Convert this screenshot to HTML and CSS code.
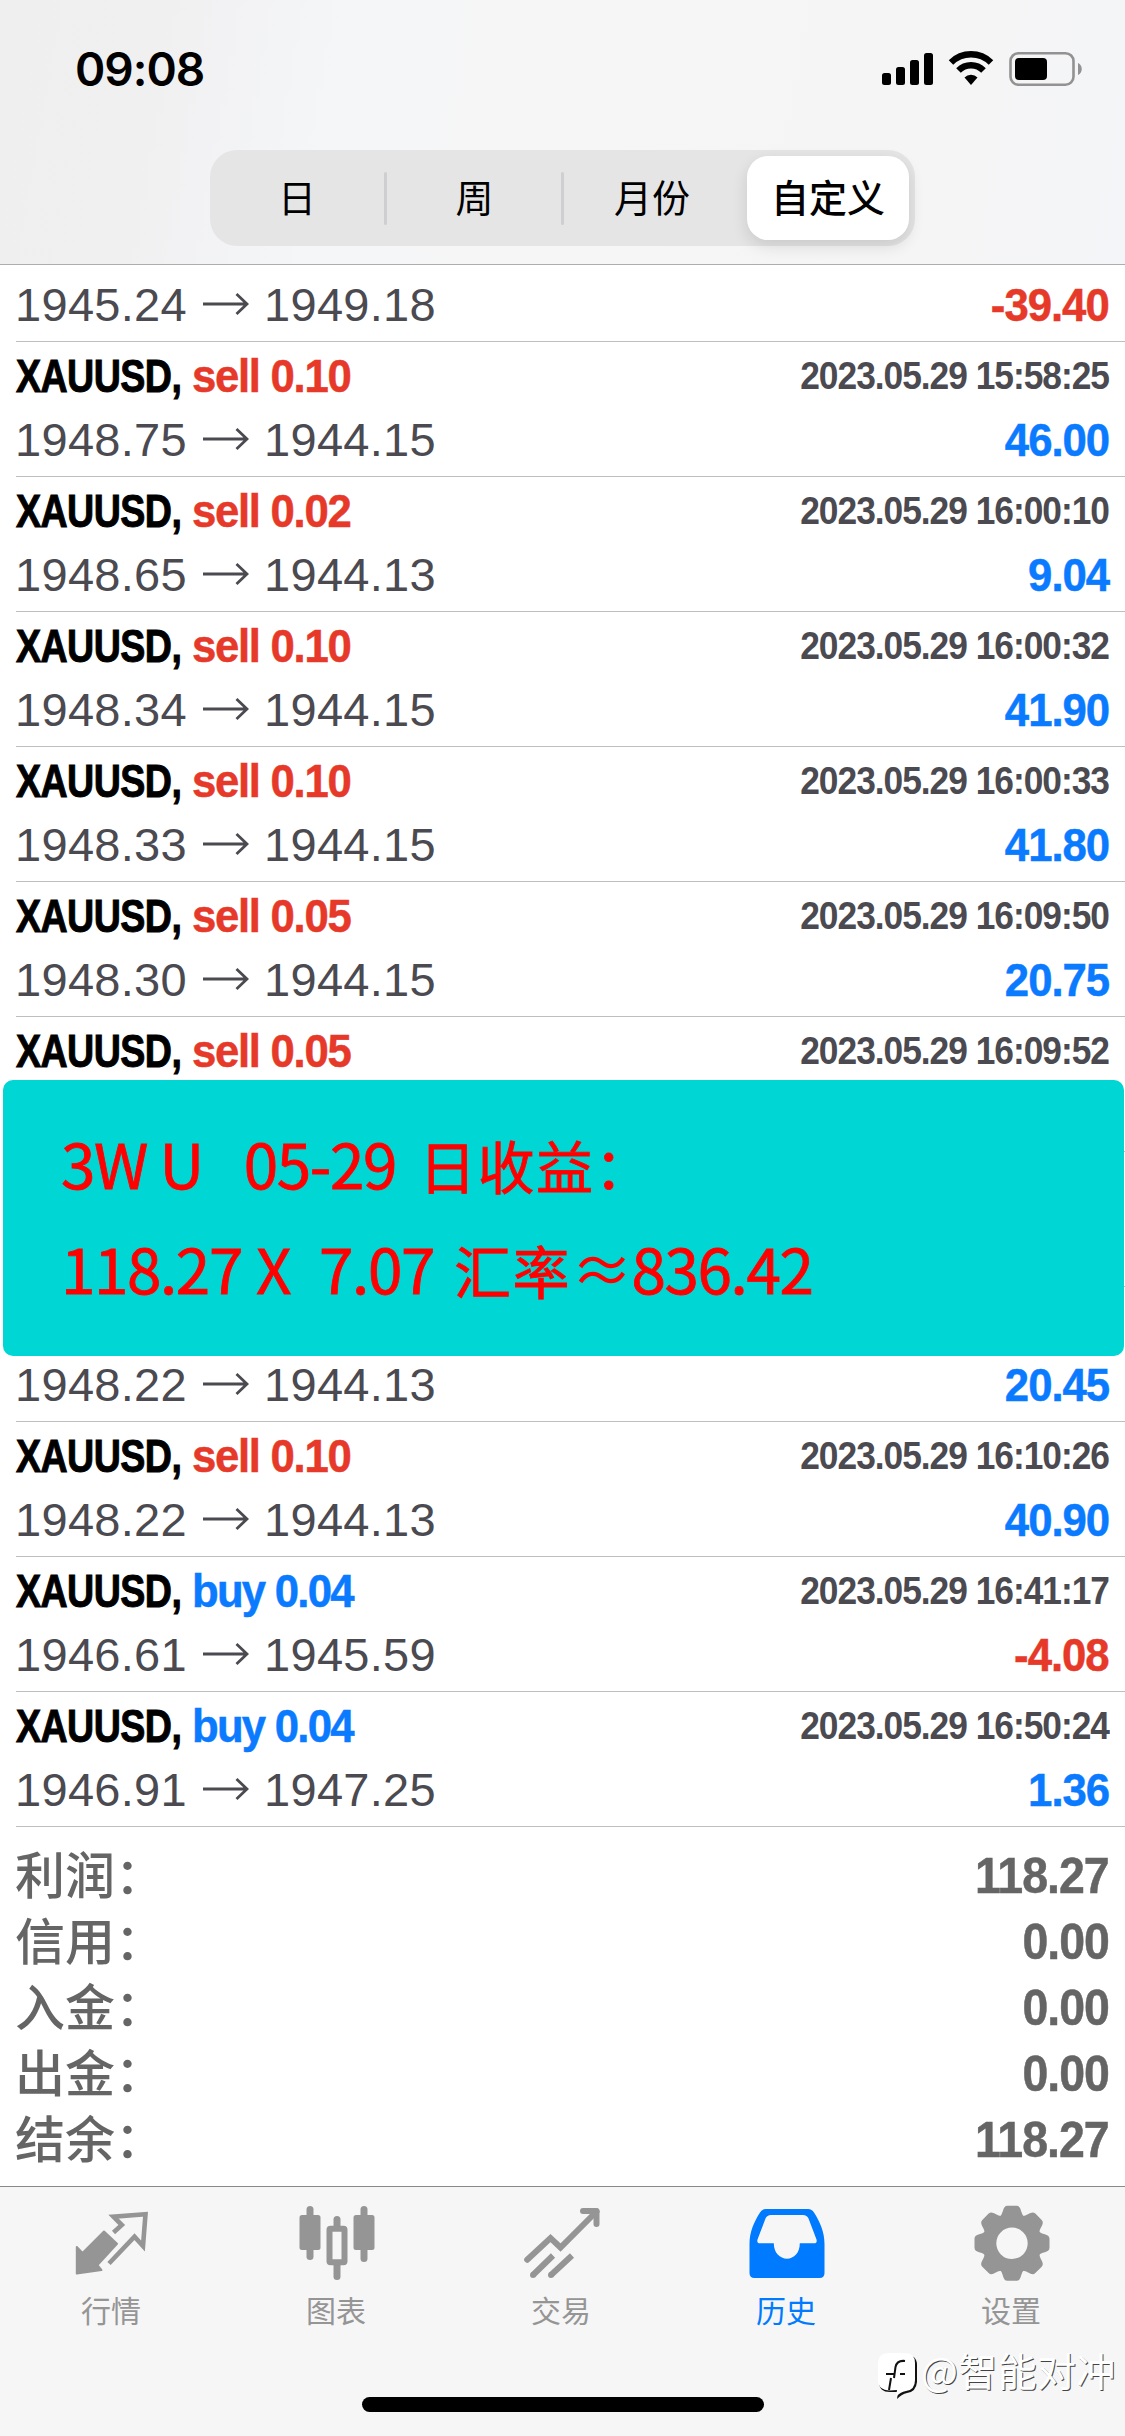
FILE: index.html
```html
<!DOCTYPE html>
<html lang="zh-CN">
<head>
  <meta charset="utf-8">
  <title>历史</title>
  <link rel="stylesheet" href="styles.css">
</head>
<body>
  <svg class="defs" width="0" height="0">
    <symbol id="arrow" viewBox="0 0 46 24">
      <path d="M0 12H44M33.5 2L44 12L33.5 22" fill="none" stroke="currentColor" stroke-width="2.8"/>
    </symbol>
    <symbol id="tooth" viewBox="-40 -40 80 80">
      <path d="M-13 -26C-8 -29 -10 -37.5 -4.5 -37.5H4.5C10 -37.5 8 -29 13 -26Z"/>
    </symbol>
  </svg>

  <header class="header">
    <div class="status-bar">
      <span class="time">09:08</span>
      <svg class="status-icons" width="202" height="36" viewBox="0 0 202 36">
        <rect x="1" y="22" width="9" height="12" rx="2.5"/>
        <rect x="15" y="16" width="9" height="18" rx="2.5"/>
        <rect x="29" y="9" width="9" height="25" rx="2.5"/>
        <rect x="43" y="2" width="9" height="32" rx="2.5"/>
        <g fill="none" stroke="#000" stroke-width="6.4">
          <path d="M70 11.5A28.5 28.5 0 0 1 110 11.5"/>
          <path d="M77.5 19.5A17.5 17.5 0 0 1 102.5 19.5"/>
        </g>
        <path d="M83.5 26.5A9 9 0 0 1 96.5 26.5L90 34Z"/>
        <rect x="129.5" y="2.2" width="63" height="31.5" rx="8" fill="none" stroke="#929292" stroke-width="2.6"/>
        <rect x="134" y="7" width="32" height="22" rx="4"/>
        <path d="M197 12C202 14 202 22 197 24Z" fill="#929292"/>
      </svg>
    </div>
    <div class="segmented">
      <button class="segment">日</button>
      <button class="segment">周</button>
      <button class="segment">月份</button>
      <button class="segment active">自定义</button>
    </div>
  </header>

  <main class="history">
    <div id="deals"></div>

    <div class="note">
      <p><span class="n1">3W U</span><span class="n2">05-29</span><b>日收益：</b></p>
      <p><span class="n3">118.27</span><span class="n4">X</span><span class="n5">7.07</span><b>汇率</b><span class="n6">≈</span><span>836.42</span></p>
    </div>

    <div class="summary">
      <div class="sum-row"><span>利润：</span><span class="sum-value">118.27</span></div>
      <div class="sum-row"><span>信用：</span><span class="sum-value">0.00</span></div>
      <div class="sum-row"><span>入金：</span><span class="sum-value">0.00</span></div>
      <div class="sum-row"><span>出金：</span><span class="sum-value">0.00</span></div>
      <div class="sum-row"><span>结余：</span><span class="sum-value">118.27</span></div>
    </div>
  </main>

  <nav class="tab-bar">
    <div class="tab">
      <svg width="84" height="84" viewBox="0 0 84 84">
        <path d="M42.5 32.5L50.8 25L42.5 16.7L74.5 14.2L72 46L63.5 36.7L38 63.5" fill="none" stroke="currentColor" stroke-width="4.6"/>
        <path d="M5.8 47L11.5 53L33 31.5L46 43.7L26.5 65L30.5 70L5.8 73.5Z" fill="currentColor" stroke="currentColor" stroke-width="2" stroke-linejoin="round"/>
      </svg>
      <span>行情</span>
    </div>
    <div class="tab">
      <svg width="84" height="84" viewBox="0 0 84 84" fill="currentColor">
        <rect x="10.5" y="6" width="7" height="54" rx="3.5"/>
        <rect x="3.5" y="15" width="21" height="35" rx="2.5"/>
        <rect x="64.5" y="6" width="7" height="56" rx="3.5"/>
        <rect x="57.5" y="15" width="21" height="35" rx="2.5"/>
        <rect x="37.5" y="16" width="7" height="14" rx="3.5"/>
        <rect x="37.5" y="62" width="7" height="18" rx="3.5"/>
        <rect x="33.5" y="28.7" width="15" height="33.5" rx="1" fill="none" stroke="currentColor" stroke-width="6"/>
      </svg>
      <span>图表</span>
    </div>
    <div class="tab">
      <svg width="84" height="84" viewBox="0 0 84 84" fill="none" stroke="currentColor" stroke-width="6">
        <path d="M6.2 59.7L29.5 38L39.5 47.5L75.5 11.5" stroke-linecap="round"/>
        <path d="M62 11H75.5V24" stroke-linecap="round" stroke-linejoin="round"/>
        <path d="M32 55.5L12 75M51 55.5L30 75"/>
        <path d="M12 75h0M30 75h0" stroke-linecap="round"/>
      </svg>
      <span>交易</span>
    </div>
    <div class="tab active">
      <svg width="84" height="84" viewBox="0 0 84 84" fill="currentColor">
        <path fill-rule="evenodd" d="M20 9H62Q66 9 68 12.5C74 22 78.5 32 78.5 44V73Q78.5 78 73.5 78H8.5Q3.5 78 3.5 73V44C3.5 32 8 22 14 12.5Q16 9 20 9ZM25 15Q21 15 19.5 18.5L11.5 39.5Q10.5 43.3 14 43.3H27.8C27.8 53 34 58.7 41 58.7S53.8 53 53.8 43.3H68Q71.5 43.3 70.5 39.5L62.5 18.5Q61 15 57 15Z"/>
      </svg>
      <span>历史</span>
    </div>
    <div class="tab">
      <svg width="84" height="84" viewBox="0 0 84 84">
        <g transform="translate(41 43.3)" fill="currentColor">
          <circle r="22.6" fill="none" stroke="currentColor" stroke-width="13.8"/>
          <g id="teeth">
            <use href="#tooth" x="-40" y="-40" width="80" height="80"/>
            <use href="#tooth" x="-40" y="-40" width="80" height="80" transform="rotate(45)"/>
            <use href="#tooth" x="-40" y="-40" width="80" height="80" transform="rotate(90)"/>
            <use href="#tooth" x="-40" y="-40" width="80" height="80" transform="rotate(135)"/>
          </g>
          <use href="#teeth" transform="rotate(180)"/>
        </g>
      </svg>
      <span>设置</span>
    </div>
    <div class="home-indicator"></div>
    <div class="watermark">
      <svg width="44" height="50" viewBox="0 0 44 50">
        <path d="M13 3H29Q40 3 40 13V30Q39 40 30 41Q25 42 20 47L21 40L13 40Q2 40 2 30V14Q2 3 13 3Z" fill="#111"/>
        <path d="M12 1H28Q38 1 38 11V28Q38 38 29 39Q23 40 19 45L20 38L13 38.5Q1 38 1 28V12Q1 1 12 1Z" fill="#fff"/>
        <path d="M28 9Q20 8 18.5 15L17 26M9 22H18M23 22H28M14 26L12 38" fill="none" stroke="#111" stroke-width="2"/>
      </svg>
      <span>@智能对冲</span>
    </div>
  </nav>

  <script>
    // rows under the header and the note keep their height but not all of their text
    const deals = [
      ['', '', '', '1945.24', '1949.18', '-39.40'],
      ['sell', '0.10', '2023.05.29 15:58:25', '1948.75', '1944.15', '46.00'],
      ['sell', '0.02', '2023.05.29 16:00:10', '1948.65', '1944.13', '9.04'],
      ['sell', '0.10', '2023.05.29 16:00:32', '1948.34', '1944.15', '41.90'],
      ['sell', '0.10', '2023.05.29 16:00:33', '1948.33', '1944.15', '41.80'],
      ['sell', '0.05', '2023.05.29 16:09:50', '1948.30', '1944.15', '20.75'],
      ['sell', '0.05', '2023.05.29 16:09:52'],
      [],
      [null, null, null, '1948.22', '1944.13', '20.45'],
      ['sell', '0.10', '2023.05.29 16:10:26', '1948.22', '1944.13', '40.90'],
      ['buy', '0.04', '2023.05.29 16:41:17', '1946.61', '1945.59', '-4.08'],
      ['buy', '0.04', '2023.05.29 16:50:24', '1946.91', '1947.25', '1.36']
    ];

    const dealTop = (side, lots, time) => `
      <span class="symbol">XAUUSD,</span>
      <span class="side ${side}">${side} ${lots}</span>
      <span class="deal-time">${time}</span>`;

    const dealBottom = (open, close, profit) => `
      <span class="price">${open}</span>
      <svg class="arrow" width="46" height="24"><use href="#arrow"/></svg>
      <span class="price">${close}</span>
      <span class="profit ${profit < 0 ? 'loss' : ''}">${profit}</span>`;

    document.getElementById('deals').innerHTML = deals.map(([side, lots, time, open, close, profit]) => `
      <div class="deal">
        <div class="deal-top">${side != null ? dealTop(side, lots, time) : ''}</div>
        <div class="deal-bottom">${open ? dealBottom(open, close, profit) : ''}</div>
      </div>`).join('');
  </script>
</body>
</html>
```
FILE: styles.css
```css
* {
  margin: 0;
  padding: 0;
  box-sizing: border-box;
}

body {
  width: 1125px;
  height: 2436px;
  overflow: hidden;
  background: #fff;
  color: #000;
  font-family: "Liberation Sans", "Noto Sans CJK SC", sans-serif;
  display: flex;
  flex-direction: column;
}

.defs {
  position: absolute;
}

/* Header */
.header {
  position: relative;
  z-index: 2;
  height: 265px;
  flex-shrink: 0;
  background: linear-gradient(100deg, #efeff0 0, #f0f0f1 14%, #f5f6f8 30%, #f6f6f6 50%, #f5f5f5 80%, #f4f5f8 100%);
  border-bottom: 1px solid #adadad;
}

.status-bar {
  height: 138px;
  padding: 0 42px 0 75px;
  display: flex;
  align-items: center;
  justify-content: space-between;
}

.time {
  font-family: Inter, sans-serif;
  font-size: 46px;
  font-weight: 600;
  letter-spacing: -1px;
}

.segmented {
  width: 705px;
  height: 96px;
  margin: 12px 0 0 210px;
  padding: 6px;
  border-radius: 27px;
  background: #e5e5e6;
  display: flex;
}

.segment {
  position: relative;
  width: 177px;
  border: none;
  background: none;
  font-family: "Noto Sans CJK SC", sans-serif;
  font-size: 38px;
  line-height: 80px;
  padding-bottom: 4px;
}

.segment:nth-child(1) {
  width: 170px;
  padding-right: 8px;
}

.segment:nth-child(3) {
  width: 184px;
  padding-right: 6px;
}

.segment:nth-child(-n+2)::after {
  content: "";
  position: absolute;
  right: -1px;
  top: 16px;
  width: 3px;
  height: 53px;
  border-radius: 2px;
  background: #cfcfd2;
}

.segment.active {
  width: 162px;
  border-radius: 21px;
  background: #fff;
  font-weight: 500;
  box-shadow: 0 6px 16px rgba(0, 0, 0, 0.12);
}

/* Deals */
.history {
  position: relative;
  height: 1921px;
  flex-shrink: 0;
}

#deals {
  margin-top: -58px;
}

.deal {
  height: 135px;
  margin-left: 16px;
  padding: 3px 16px 6px 0;
  border-bottom: 1px solid #bebebf;
}

.deal-top {
  height: 64px;
  font-size: 47px;
  font-weight: bold;
  line-height: 62px;
  white-space: nowrap;
  display: flex;
}

.symbol {
  width: 176px;
  letter-spacing: -0.7px;
  transform: scaleX(0.8);
  transform-origin: left;
  -webkit-text-stroke: 1px #000;
}

.side,
.deal-time,
.profit,
.sum-value {
  letter-spacing: -1.1px;
  transform: scaleX(0.93);
}

.side {
  transform-origin: left;
  letter-spacing: -1.4px;
}

.side.buy {
  letter-spacing: -1.9px;
}

.deal-time,
.profit,
.sum-value {
  margin-left: auto;
  transform-origin: right;
}

.sell,
.profit.loss {
  color: #e63929;
}

.buy,
.profit {
  color: #0a7aff;
}

.side,
.profit {
  -webkit-text-stroke: 0.5px currentColor;
}

.deal-time {
  color: #4b4a51;
  font-size: 38px;
}

.deal-bottom {
  height: 61px;
  font-size: 47px;
  line-height: 61px;
  display: flex;
}

.price {
  color: #4b4a51;
  letter-spacing: 0.3px;
}

.price:first-child {
  margin-left: -1px;
}

.arrow {
  margin: 18px 15px 0 16px;
  color: #4b4a51;
}

.profit {
  font-weight: bold;
}

/* Note laid over the list */
.note {
  position: absolute;
  left: 3px;
  top: 815px;
  width: 1121px;
  height: 276px;
  padding: 30px 58px;
  border-radius: 10px;
  background: #00d6d4;
  color: #f00;
  font-family: "Noto Sans CJK SC", sans-serif;
  font-size: 62px;
  font-weight: 400;
  letter-spacing: -1.4px;
  white-space: nowrap;
  -webkit-text-stroke: 0.8px #f00;
}

.note p {
  height: 105px;
  line-height: 105px;
  display: flex;
  align-items: baseline;
}

.note b {
  font-size: 57px;
  font-weight: 400;
  letter-spacing: 1.5px;
}

.n1 {
  margin-right: 41px;
}

.n2 {
  margin-right: 23px;
}

.n3 {
  margin-right: 14px;
}

.n4 {
  margin-right: 29px;
}

.n5 {
  margin-right: 20px;
}

.n6 {
  -webkit-text-stroke: 0;
}

/* Summary */
.summary {
  padding: 14px 16px 0 15px;
  color: #656565;
}

.sum-row {
  height: 66px;
  font-family: "Noto Sans CJK SC", sans-serif;
  font-size: 50px;
  font-weight: 500;
  line-height: 63px;
  display: flex;
}

.sum-value {
  font-family: "Liberation Sans", sans-serif;
  font-size: 50px;
  font-weight: bold;
  line-height: 70px;
  -webkit-text-stroke: 0.5px currentColor;
}

/* Tab bar */
.tab-bar {
  position: relative;
  height: 250px;
  padding-top: 13px;
  background: #f6f6f6;
  border-top: 1px solid #8a8a8a;
  display: flex;
}

.tab {
  width: 225px;
  color: #959595;
  font-family: "Noto Sans CJK SC", sans-serif;
  font-size: 30px;
  line-height: 40px;
  display: flex;
  flex-direction: column;
  align-items: center;
  gap: 5px;
}

.tab.active {
  color: #007aff;
}

.tab span {
  margin-right: 3px;
}

.home-indicator {
  position: absolute;
  left: 362px;
  bottom: 24px;
  width: 402px;
  height: 15px;
  border-radius: 8px;
  background: #000;
}

.watermark {
  position: absolute;
  left: 877px;
  top: 165px;
  display: flex;
  color: #fff;
  font-family: "Noto Sans CJK SC", sans-serif;
  font-size: 39px;
  font-weight: 400;
  line-height: 34px;
  letter-spacing: 0.4px;
  text-shadow: 1px 1px 0 #444;
}
```
